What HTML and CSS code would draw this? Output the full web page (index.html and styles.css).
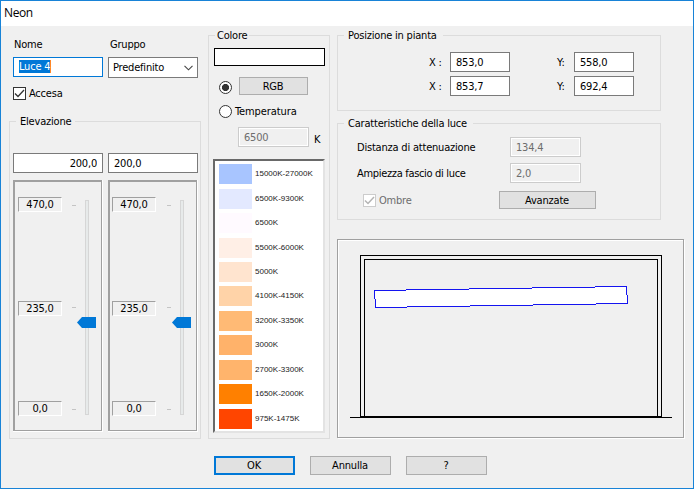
FILE: index.html
```html
<!DOCTYPE html>
<html lang="it">
<head>
  <meta charset="UTF-8" />
  <title>Neon</title>
  <link rel="stylesheet" href="styles.css">
</head>
<body>
  <div class="window">
    <div class="titlebar">Neon</div>

    <div class="columns">
      <div class="col-left">
        <div class="pair labels">
          <label>Nome</label>
          <label class="label-group">Gruppo</label>
        </div>
        <div class="pair">
          <div class="field focused"><span class="selected">Luce 4</span></div>
          <div class="field combo">
            <span>Predefinito</span>
            <svg width="9" height="6" viewBox="0 0 9 6"><path d="M0.5 0.8L4.5 4.8L8.5 0.8" fill="none" stroke="#444" stroke-width="1.1"/></svg>
          </div>
        </div>
        <div class="check-row">
          <span class="checkbox"><svg width="11" height="11" viewBox="0 0 11 11"><path d="M1 5.5L4 8.5L10 2" fill="none" stroke="#333" stroke-width="1.3"/></svg></span>
          <span>Accesa</span>
        </div>

        <fieldset class="elevation">
          <legend>Elevazione</legend>
          <div class="pair">
            <input class="field right" type="text" value="200,0">
            <input class="field" type="text" value="200,0">
          </div>
          <div class="pair sliders">
            <div class="slider">
              <div class="scale">
                <span class="mark">470,0</span>
                <span class="mark">235,0</span>
                <span class="mark">0,0</span>
              </div>
              <div class="ticks"><i></i><i></i><i></i></div>
              <div class="track">
                <svg class="thumb" width="19" height="11" viewBox="0 0 19 11"><path d="M0 5.5L5 0H19V11H5Z" fill="#0078d7"/></svg>
              </div>
            </div>
            <div class="slider second">
              <div class="scale">
                <span class="mark">470,0</span>
                <span class="mark">235,0</span>
                <span class="mark">0,0</span>
              </div>
              <div class="ticks"><i></i><i></i><i></i></div>
              <div class="track">
                <svg class="thumb" width="19" height="11" viewBox="0 0 19 11"><path d="M0 5.5L5 0H19V11H5Z" fill="#0078d7"/></svg>
              </div>
            </div>
          </div>
        </fieldset>
      </div>

      <fieldset class="color">
        <legend>Colore</legend>
        <div class="preview-color"></div>
        <div class="radio-row rgb">
          <span class="radio checked"></span>
          <button class="btn">RGB</button>
        </div>
        <div class="radio-row temp">
          <span class="radio"></span>
          <span>Temperatura</span>
        </div>
        <div class="kelvin">
          <input class="field disabled" type="text" value="6500" disabled>
          <span>K</span>
        </div>
        <div class="temps">
          <div class="temp-row"><i class="c1"></i>15000K-27000K</div>
          <div class="temp-row"><i class="c2"></i>6500K-9300K</div>
          <div class="temp-row"><i class="c3"></i>6500K</div>
          <div class="temp-row"><i class="c4"></i>5500K-6000K</div>
          <div class="temp-row"><i class="c5"></i>5000K</div>
          <div class="temp-row"><i class="c6"></i>4100K-4150K</div>
          <div class="temp-row"><i class="c7"></i>3200K-3350K</div>
          <div class="temp-row"><i class="c8"></i>3000K</div>
          <div class="temp-row"><i class="c9"></i>2700K-3300K</div>
          <div class="temp-row"><i class="c10"></i>1650K-2000K</div>
          <div class="temp-row"><i class="c11"></i>975K-1475K</div>
        </div>
      </fieldset>

      <div class="col-right">
        <fieldset class="position">
          <legend>Posizione in pianta</legend>
          <div class="coords">
            <label>X :</label><input class="field" type="text" value="853,0">
            <label class="y">Y:</label><input class="field" type="text" value="558,0">
            <label>X :</label><input class="field" type="text" value="853,7">
            <label class="y">Y:</label><input class="field" type="text" value="692,4">
          </div>
        </fieldset>

        <fieldset class="light">
          <legend>Caratteristiche della luce</legend>
          <div class="light-row first">
            <label>Distanza di attenuazione</label>
            <input class="field disabled" type="text" value="134,4" disabled>
          </div>
          <div class="light-row">
            <label class="beam">Ampiezza fascio di luce</label>
            <input class="field disabled" type="text" value="2,0" disabled>
          </div>
          <div class="light-actions">
            <span class="checkbox off"><svg width="11" height="11" viewBox="0 0 11 11"><path d="M1 5.5L4 8.5L10 2" fill="none" stroke="#b4b4b4" stroke-width="1.5"/></svg></span>
            <span class="shadow-label">Ombre</span>
            <button class="btn">Avanzate</button>
          </div>
        </fieldset>

        <!-- section of the room with the lamp -->
        <div class="section">
          <svg width="345" height="197" viewBox="338 240 345 197" shape-rendering="crispEdges">
            <path d="M360.5 417V255.5H661.5V417M364.5 417V259.5H657.5V417" fill="none" stroke="#000"/>
            <path d="M360 416.5H662M350 417.5H672" stroke="#000"/>
            <path d="M374 290H406V289H469V288H532V287H595V286H627V295H628V304H596V305H533V306H470V307H407V308H375V299H374Z" fill="#1414f0"/>
            <path d="M375 291H406V290H469V289H532V288H595V287H626V295H627V303H596V304H533V305H470V306H407V307H376V299H375Z" fill="#fff"/>
          </svg>
        </div>
      </div>
    </div>

    <div class="buttons">
      <button class="btn default">OK</button>
      <button class="btn">Annulla</button>
      <button class="btn">?</button>
    </div>
  </div>
</body>
</html>
```
FILE: styles.css
```css
* {
  box-sizing: border-box;
}

body {
  margin: 0;
  font-family: "DejaVu Sans Condensed", "DejaVu Sans", sans-serif;
  font-stretch: condensed;
  font-size: 11px;
  line-height: 13px;
  letter-spacing: -0.2px;
  color: #000;
}

.window {
  width: 694px;
  height: 489px;
  border: 1px solid #1883d7;
  background: #f0f0f0;
  overflow: hidden;
}

.titlebar {
  height: 25px;
  padding-left: 3px;
  background: #fff;
  font: 12px/24px "Open Sans", sans-serif;
  letter-spacing: -0.4px;
}

.columns {
  display: flex;
  gap: 7px;
  padding-left: 8px;
  height: 413px;
}

fieldset {
  margin: 0;
  padding: 0;
  min-width: 0;
  border: 1px solid #dcdcdc;
}

legend {
  height: 13px;
  padding: 0 4px;
  white-space: nowrap;
}

label,
span {
  white-space: nowrap;
}

svg {
  display: block;
}

.field {
  display: block;
  height: 20px;
  margin: 0;
  padding: 0 5px;
  border: 1px solid #7a7a7a;
  border-radius: 0;
  background: #fff;
  color: #000;
  font: inherit;
  letter-spacing: inherit;
  line-height: 18px;
  min-width: 0;
  outline: none;
}

.field.right {
  text-align: right;
}

.field.disabled {
  width: 71px;
  border-color: #ccc;
  background: #f0f0f0;
  box-shadow: inset 0 0 0 1px #fff;
  color: #6d6d6d;
}

.field.focused {
  padding-top: 2px;
  border-color: #0078d7;
}

.selected {
  display: block;
  width: 32px;
  height: 13px;
  line-height: 13px;
  background: #0078d7;
  color: #fff;
  border-right: 1px solid #ff8728;
}

.field.combo {
  display: flex;
  justify-content: space-between;
  align-items: center;
  height: 21px;
  padding: 0 4px;
}

.btn {
  height: 18px;
  margin: 0;
  padding: 0 1px 0 0;
  border: 1px solid #adadad;
  border-radius: 0;
  background: #e1e1e1;
  color: #000;
  font: inherit;
  letter-spacing: inherit;
}

.btn.default {
  border: 2px solid #0078d7;
}

/* left column */
.col-left {
  width: 192px;
  padding-top: 12px;
}

.pair {
  display: grid;
  grid-template-columns: 90px 90px;
  gap: 5px;
  margin-left: 4px;
}

.labels {
  height: 19px;
  padding-left: 1px;
}

.label-group {
  padding-left: 1px;
}

.check-row {
  display: flex;
  align-items: center;
  gap: 3px;
  height: 13px;
  margin: 9px 0 0 4px;
}

.checkbox {
  width: 13px;
  height: 13px;
  border: 1px solid #333;
  background: #fff;
}

.checkbox.off {
  border-color: #ccc;
}

.elevation {
  height: 324px;
  margin-top: 15px;
}

.elevation legend {
  margin-left: 6px;
}

.elevation .pair {
  margin: 25px 0 0 3px;
}

.elevation .pair.sliders {
  margin-top: 7px;
}

.slider {
  display: flex;
  width: 90px;
  height: 252px;
  padding: 17px 0 0 5px;
  border: 1px solid #fff;
  border-width: 0 1px 1px 0;
  box-shadow: inset 2px 2px #a0a0a0, inset -1px -1px #a0a0a0;
}

.slider.second {
  padding-left: 4px;
}

.scale {
  display: flex;
  flex-direction: column;
  width: 44px;
}

.mark {
  height: 15px;
  border: 1px solid;
  border-color: #a0a0a0 #fff #fff #a0a0a0;
  text-align: center;
  line-height: 14px;
  margin-bottom: 89px;
}

.mark:nth-child(2) {
  margin-bottom: 85px;
}

.ticks {
  display: flex;
  flex-direction: column;
  justify-content: space-between;
  height: 205px;
  margin: 8px 0 0 10px;
}

.second .ticks {
  margin-left: 11px;
}

.ticks i {
  width: 4px;
  height: 1px;
  background: #c4c4c4;
}

.track {
  position: relative;
  width: 4px;
  height: 215px;
  margin: 3px 0 0 9px;
  border: 1px solid #d6d6d6;
  background: #e7eaea;
}

.thumb {
  position: absolute;
  left: -9px;
  top: 116px;
}

/* colour column */
.color {
  width: 122px;
  height: 410px;
  margin-top: 3px;
  padding: 0 0 0 5px;
}

.color legend {
  padding: 0 2px;
  margin-left: 1px;
}

.preview-color {
  width: 111px;
  height: 18px;
  margin-top: 6px;
  border: 1px solid #000;
  background: #fff;
}

.radio-row {
  display: flex;
  align-items: center;
  padding-left: 5px;
}

.rgb {
  height: 18px;
  margin-top: 11px;
  gap: 7px;
}

.rgb .radio {
  margin-top: 3px;
}

.rgb .btn {
  width: 69px;
}

.radio {
  width: 13px;
  height: 13px;
  border: 1px solid #333;
  border-radius: 50%;
  background: #fff;
}

.radio.checked {
  background: radial-gradient(circle, #333 3.2px, #fff 3.9px);
}

.temp {
  height: 13px;
  margin-top: 10px;
  gap: 3px;
  letter-spacing: -0.1px;
}

.kelvin {
  display: flex;
  align-items: center;
  gap: 5px;
  margin: 9px 0 0 24px;
}

.kelvin span {
  padding-top: 4px;
}

.temps {
  width: 112px;
  height: 274px;
  margin: 12px 0 0 -1px;
  padding: 1px 0 0 4px;
  border: 2px solid;
  border-color: #696969 #e3e3e3 #e3e3e3 #696969;
  background: #fff;
}

.temp-row {
  display: flex;
  align-items: center;
  gap: 3px;
  height: 24.45px;
  font: 8px/10px "Liberation Sans", Arial, sans-serif;
  letter-spacing: 0;
  color: #222;
}

.temp-row i {
  width: 33px;
  height: 20px;
}

.c1 { background: #a8c5ff; }
.c2 { background: #e3e9ff; }
.c3 { background: #fffaff; }
.c4 { background: #ffefe6; }
.c5 { background: #ffe4cf; }
.c6 { background: #ffd3a8; }
.c7 { background: #ffba75; }
.c8 { background: #ffb26a; }
.c9 { background: #ffb46c; }
.c10 { background: #ff8000; }
.c11 { background: #ff4500; }

/* right column */
.col-right {
  width: 348px;
  padding-top: 3px;
}

.position {
  width: 324px;
  height: 82px;
}

.position legend,
.light legend {
  padding: 0 6px 0 4px;
  margin-left: 6px;
}

.coords {
  display: grid;
  grid-template-columns: 21px 60px 64px 60px;
  row-gap: 4px;
  align-items: center;
  margin: 10px 0 0 91px;
}

.coords .y {
  padding-left: 47px;
}

.light {
  width: 324px;
  height: 103px;
  margin-top: 6px;
}

.light-row {
  display: flex;
  align-items: center;
  justify-content: space-between;
  height: 20px;
  margin: 6px 79px 0 19px;
}

.light-row.first {
  margin-top: 7px;
}

.beam {
  letter-spacing: -0.32px;
}

.light-actions {
  display: flex;
  align-items: center;
  height: 18px;
  margin: 8px 64px 0 25px;
}

.shadow-label {
  flex: 1;
  padding-left: 3px;
  color: #6d6d6d;
}

.light-actions .btn {
  width: 97px;
}

.section {
  width: 347px;
  height: 199px;
  margin-top: 19px;
  border: 1px solid #a0a0a0;
  box-shadow: inset 1px 1px #fff, 1px 1px #fff;
}

.buttons {
  display: flex;
  gap: 15px;
  margin: 17px 0 0 213px;
}

.buttons .btn {
  width: 81px;
  height: 19px;
}
```
